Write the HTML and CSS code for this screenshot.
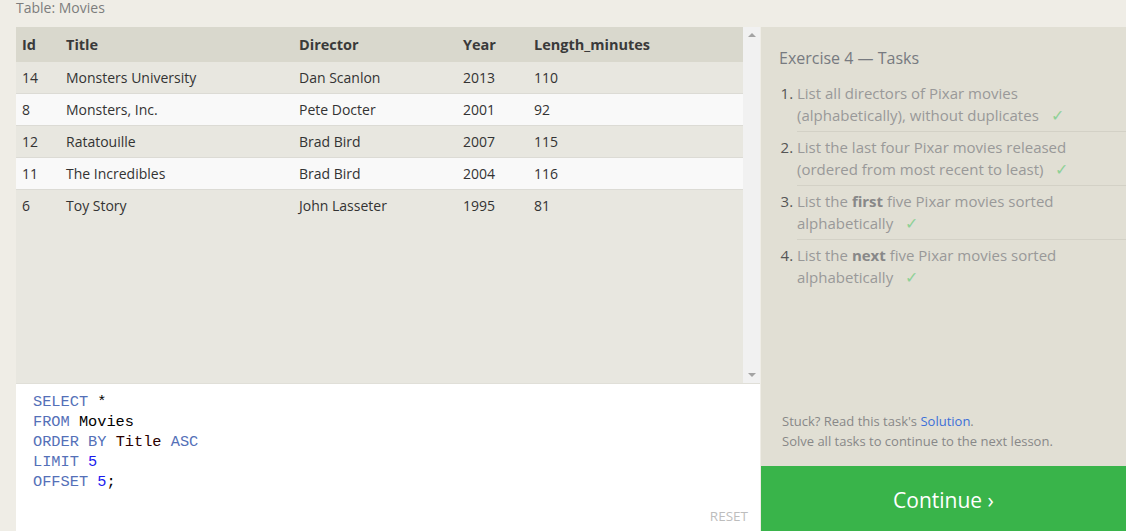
FILE: index.html
```html
<!DOCTYPE html>
<html>
<head>
<meta charset="utf-8">
<link rel="stylesheet" href="styles.css">
</head>
<body>
<div class="caption">Table: Movies</div>
<div class="main">
  <div class="left">
    <div class="table-area">
      <div class="table-scroll">
        <table class="grid">
          <thead>
            <tr><th class="c-id">Id</th><th class="c-title">Title</th><th class="c-dir">Director</th><th class="c-year">Year</th><th>Length_minutes</th></tr>
          </thead>
          <tbody>
            <tr><td>14</td><td>Monsters University</td><td>Dan Scanlon</td><td>2013</td><td>110</td></tr>
            <tr><td>8</td><td>Monsters, Inc.</td><td>Pete Docter</td><td>2001</td><td>92</td></tr>
            <tr><td>12</td><td>Ratatouille</td><td>Brad Bird</td><td>2007</td><td>115</td></tr>
            <tr><td>11</td><td>The Incredibles</td><td>Brad Bird</td><td>2004</td><td>116</td></tr>
            <tr><td>6</td><td>Toy Story</td><td>John Lasseter</td><td>1995</td><td>81</td></tr>
          </tbody>
        </table>
      </div>
      <div class="scrollbar">
        <span class="arrow up"></span>
        <span class="arrow down"></span>
      </div>
    </div>
    <div class="editor">
      <pre class="code"><span class="kw">SELECT</span> <span class="op">*</span>
<span class="kw">FROM</span> <span class="id">Movies</span>
<span class="kw">ORDER BY</span> <span class="col">Title</span> <span class="kw">ASC</span>
<span class="kw">LIMIT</span> <span class="num">5</span>
<span class="kw">OFFSET</span> <span class="num">5</span><span class="op">;</span></pre>
      <div class="reset">RESET</div>
    </div>
  </div>
  <div class="right">
    <div class="tasks">
      <h2 class="ex-title">Exercise 4 — Tasks</h2>
      <ol class="task-list">
        <li>List all directors of Pixar movies (alphabetically), without duplicates <span class="check">✓</span></li>
        <li>List the last four Pixar movies released (ordered from most recent to least) <span class="check">✓</span></li>
        <li>List the <b>first</b> five Pixar movies sorted alphabetically <span class="check">✓</span></li>
        <li>List the <b>next</b> five Pixar movies sorted alphabetically <span class="check">✓</span></li>
      </ol>
    </div>
    <div class="help">
      <div>Stuck? Read this task's <a class="link">Solution</a>.</div>
      <div>Solve all tasks to continue to the next lesson.</div>
    </div>
    <div class="continue">Continue ›</div>
  </div>
</div>
</body>
</html>
```

FILE: styles.css
```css
html, body {
  margin: 0;
  padding: 0;
}
body {
  background: #efede6;
  font-family: "Open Sans", "Noto Sans", sans-serif;
  width: 1126px;
  height: 531px;
  overflow: hidden;
}
.caption {
  height: 27px;
  padding-left: 16px;
  font-size: 14px;
  line-height: 16px;
  color: #7d7d7d;
}
.main {
  display: flex;
  height: 504px;
}
.left {
  margin-left: 16px;
  width: 744px;
  display: flex;
  flex-direction: column;
}
.table-area {
  height: 356px;
  display: flex;
  background: #e8e7e0;
  border-bottom: 1px solid #e0dfd8;
}
.table-scroll {
  flex: 1;
}
.grid {
  width: 100%;
  border-collapse: collapse;
  font-size: 14px;
  color: #333;
}
.grid th {
  background: #d9d8cd;
  text-align: left;
  font-weight: 700;
  height: 35px;
  padding: 0 0 0 6px;
  color: #3a3a3a;
  font-size: 14.5px;
}
.grid td {
  height: 31px;
  padding: 0 0 0 6px;
  border-bottom: 1px solid #dcdbd5;
}
.grid tbody tr:nth-child(odd) td {
  background: #e8e7e0;
}
.grid tbody tr:nth-child(even) td {
  background: #f9f9f9;
}
.grid tbody tr:last-child td {
  border-bottom: none;
}
.c-id { width: 38px; }
.c-title { width: 227px; }
.c-dir { width: 158px; }
.c-year { width: 65px; }
.scrollbar {
  width: 17px;
  background: #f1f1f1;
  display: flex;
  flex-direction: column;
  justify-content: space-between;
  align-items: center;
  padding: 6px 0 6px;
  box-sizing: border-box;
}
.arrow {
  width: 0;
  height: 0;
  border-left: 4px solid transparent;
  border-right: 4px solid transparent;
}
.arrow.up {
  border-bottom: 4px solid #a3a3a3;
}
.arrow.down {
  border-top: 4px solid #a3a3a3;
}
.editor {
  flex: 1;
  background: #fff;
  position: relative;
}
.code {
  margin: 0;
  padding: 8px 0 0 17px;
  font-family: "Liberation Mono", "DejaVu Sans Mono", monospace;
  font-size: 15.3px;
  line-height: 20px;
  color: #000;
}
.kw { color: #5470b8; }
.op { color: #000; }
.id { color: #000; }
.col { color: #2a0000; }
.num { color: #1a1aee; }
.reset {
  position: absolute;
  right: 12px;
  bottom: 6px;
  font-size: 13.5px;
  color: #bdbdbd;
  letter-spacing: 0;
}
.right {
  margin-left: 1px;
  flex: 1;
  background: #e1dfd4;
  display: flex;
  flex-direction: column;
}
.tasks {
  flex: 1;
  padding: 20px 0 0 18px;
}
.ex-title {
  margin: 0 0 13px;
  font-size: 16px;
  font-weight: 400;
  line-height: 22px;
  color: #777a80;
}
.task-list {
  margin: 0;
  padding-left: 18px;
  font-size: 15px;
  line-height: 22px;
  color: #999;
}
.task-list li {
  padding: 0 0 5px;
  margin-bottom: 4px;
  border-bottom: 1px solid #d3d1c6;
}
.task-list li:last-child {
  border-bottom: none;
}
.task-list li::marker {
  color: #555;
}
.task-list b {
  color: #888;
}
.check {
  color: #8fd197;
  margin-left: 8px;
  font-size: 16px;
}
.help {
  padding: 0 0 15px 21px;
  font-size: 13px;
  line-height: 20px;
  color: #888;
}
.link {
  color: #3c6fd8;
}
.continue {
  height: 65px;
  box-sizing: border-box;
  padding-top: 3px;
  background: #39b44a;
  color: #fff;
  font-size: 21px;
  display: flex;
  align-items: center;
  justify-content: center;
}
```
